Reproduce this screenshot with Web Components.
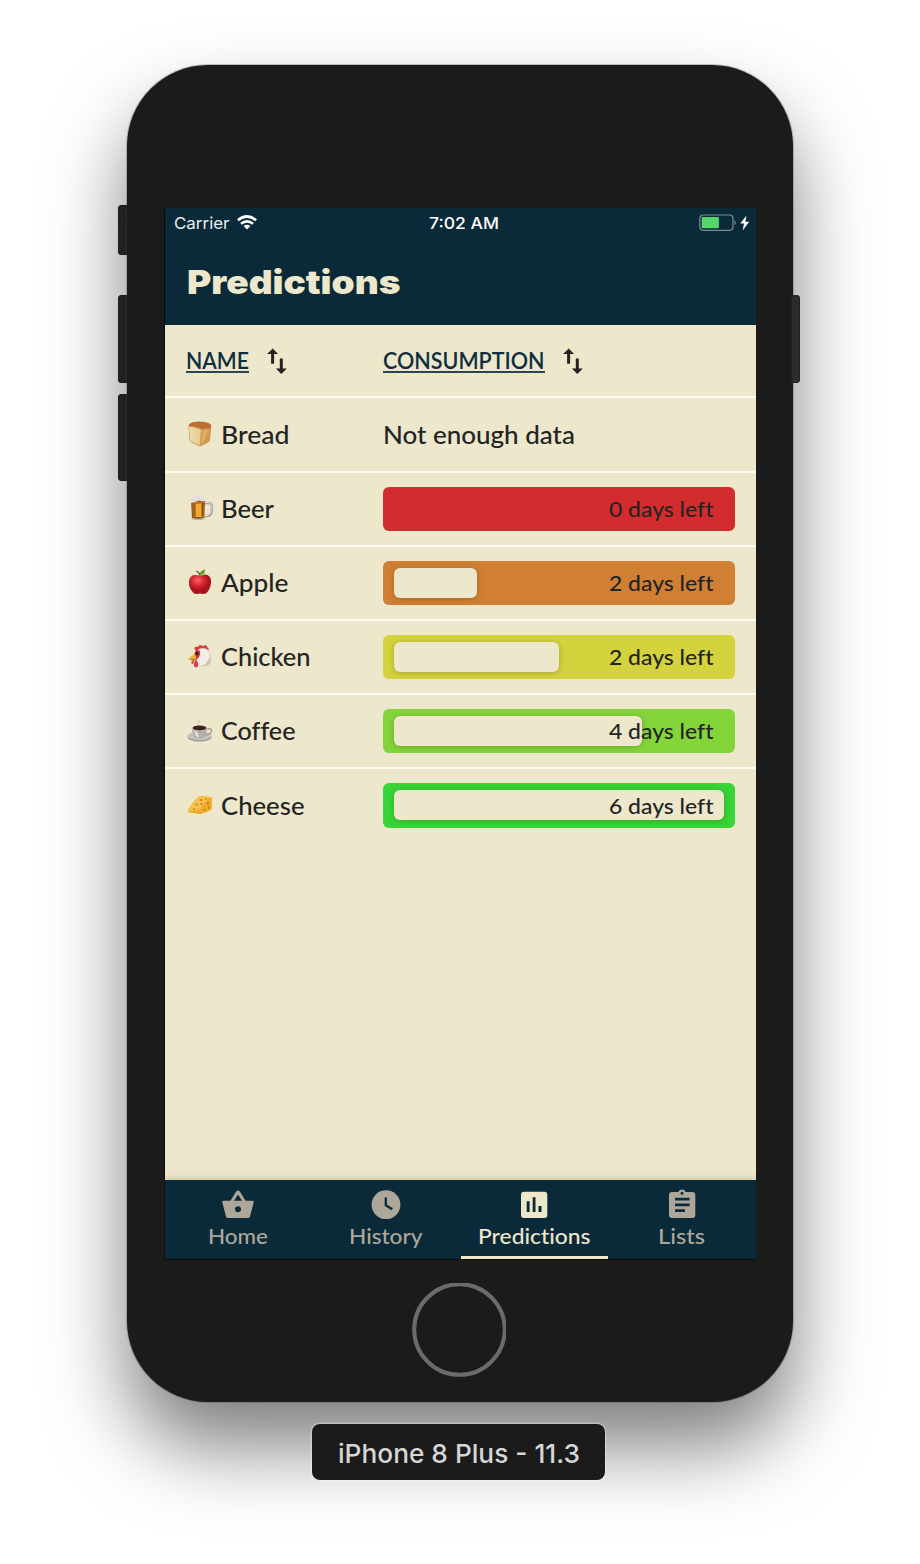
<!DOCTYPE html>
<html lang="en">
<head>
<meta charset="utf-8">
<title>Predictions</title>
<style>
html,body{margin:0;background:#fff}
body{width:920px;height:1564px;overflow:hidden;font-family:Lato,"Noto Sans",sans-serif;color:#242424;font-variant-ligatures:none}
</style>
</head>
<body>
<sim-stage>
  <phone-device>
    <status-bar></status-bar>
    <page-header>Predictions</page-header>
    <table-head></table-head>
    <item-row icon="bread" name="Bread" w="67"><fit-text w="192" style="margin-top:2px">Not enough data</fit-text></item-row>
    <item-row icon="beer" name="Beer" w="51.5"><days-bar color="#d32c2f" fill="0">0 days left</days-bar></item-row>
    <item-row icon="apple" name="Apple" w="66"><days-bar color="#d17f33" fill="25">2 days left</days-bar></item-row>
    <item-row icon="chicken" name="Chicken" w="88"><days-bar color="#d5d33d" fill="50">2 days left</days-bar></item-row>
    <item-row icon="coffee" name="Coffee" w="73"><days-bar color="#84d53a" fill="75">4 days left</days-bar></item-row>
    <item-row icon="cheese" name="Cheese" w="82" last><days-bar color="#37d538" fill="100">6 days left</days-bar></item-row>
    <tab-bar slot="tabs">
      <tab-item icon="basket" w="58">Home</tab-item>
      <tab-item icon="clock" w="71.5">History</tab-item>
      <tab-item icon="chart" w="110.5" active>Predictions</tab-item>
      <tab-item icon="list" w="45">Lists</tab-item>
    </tab-bar>
  </phone-device>
  <device-label slot="label">iPhone 8 Plus - 11.3</device-label>
</sim-stage>
<script>
function define(name, html, setup){
  const t=document.createElement('template');
  t.innerHTML=html;
  customElements.define(name, class extends HTMLElement{
    connectedCallback(){
      if(this.shadowRoot) return;
      this.attachShadow({mode:'open'}).appendChild(t.content.cloneNode(true));
      if(setup) setup(this,this.shadowRoot);
    }
  });
}

const icons={
bread:['0 0 26 26','<defs><linearGradient id="a"><stop stop-color="#f0dcae"/><stop offset="1" stop-color="#e5cb91"/></linearGradient></defs><path d="M2 6Q1 2.500 5 1.500L12 .5Q21 .5 23.500 3Q25 5 24 7.500L23 19Q23 20.500 20 22L13 25.500L4 21Q2.500 20 2.500 18Z" fill="#c98a45"/><path d="M1.500 6Q2 1 10 .8T23.500 3.500Q25 7 21 8L13 7.500Q5 3.500 1.500 6" fill="#bd6d33"/><path d="M13.500 9Q17 7 20.500 7.500T23.500 10L22.500 19.500L13 25Z" fill="#d49b50"/><path d="M16 10Q19 8 21 9L17 20L14 23Z" fill="#e0b069"/><path d="M2 9.500Q0 6 4 5.500L12 7.500Q15.500 8.500 14 12L13 25L4 20.500Q2.700 20 2.700 18Z" fill="url(#a)" stroke="#c9975a" stroke-width=".5"/>'],
beer:['0 0 26 26','<path d="M18 8h3.500q3 0 3 3v5q0 5-5 5h-1.500" fill="none" stroke="#a59d92" stroke-width="2.600"/><path d="M18 7.500h3.500q2.500 0 2.500 3v5q0 5-5 5h-1" fill="none" stroke="#ece8df" stroke-width="1"/><path d="M4 5h14l-.7 19q-6 2-12.300 0Z" fill="#8b562b"/><path d="M5.500 7h11v15H6Z" fill="#c9771c"/><path d="M9 9h5v13H9Z" fill="#edaa30"/><path d="M7 8v13M15.500 8v13" stroke="#713d14" stroke-width=".8"/><path d="M4.500 23.500q6 2 12.500 0" stroke="#ded5c4" fill="none"/><path d="M4 8Q2 4 6 2.500Q9-.5 12 1.500Q17 1 18 4Q19 6.500 16 6.500L12 5.500L8 7Z" fill="#e5dfd9"/>'],
apple:['0 0 26 26','<defs><radialGradient id="a" cx=".4" cy=".3"><stop stop-color="#f56465"/><stop offset=".55" stop-color="#d92732"/><stop offset="1" stop-color="#a9151e"/></radialGradient></defs><path d="M13 7Q17 4.500 20.500 6Q24.500 8 24 13.500Q23.500 20 19.500 24Q17 25.500 13 24.500Q9 25.500 6.500 24Q1.500 19 2 12.500Q2.500 7 7 6Q10 5.500 13 7" fill="url(#a)"/><path d="M13 7.500Q13 4 9.500 2" stroke="#74452a" stroke-width="1.300" fill="none"/><path d="M12.500 6.500Q12.500 1.500 18 .5Q18.500 5.500 12.500 6.500" fill="#4da72b"/>'],
chicken:['0 0 26 26','<path d="M8 6Q6 2 11 3Q12-.5 15.500 2Q20 0 20.500 3.500Q22.500 4 21 7L11 9Z" fill="#d93d48"/><path d="M8.500 9Q12 3 18 4.500Q23 6 23 12L23.500 18Q23 22 15 22Q9 22 9 16Z" fill="#f4ede5" stroke="#c9bdab" stroke-width=".5"/><path d="M23 12L23.500 18Q23 22 15 22Q21 19 23 12" fill="#d0c3b3"/><path d="M7.500 9Q9 5 13 7Q14 10 12 13L9 16L7 13Z" fill="#cf303b"/><ellipse cx="10" cy="9.500" rx="1.600" ry="2" fill="#33251f"/><path d="M8 10Q4 11.500 1 15.500L8 16.500Q10 13.500 8 10" fill="#eab52e"/><path d="M1 15.500L8 14.800V16.500Z" fill="#ad771b"/><path d="M5.500 16.500Q3.500 18 5 20.500Q7 19.500 7 16.500M9 15.500Q6.500 18 7 22Q9 25 11 22Q12 19 9 15.500" fill="#d9404b"/>'],
coffee:['0 0 26 26','<ellipse cx="12.500" cy="19" rx="12" ry="4.500" fill="#96948f"/><ellipse cx="12.500" cy="18" rx="12" ry="4.200" fill="#c3c1bc"/><path d="M20 11q5-1 4.500 2T18 17" fill="none" stroke="#a09d97" stroke-width="1.500"/><path d="M5 10h15q0 7-4 10q-4 1.500-7.500 0Q5 17 5 10" fill="#b0aea9"/><path d="M7 13q1.500 6 5 6.500l-1.500-5.500" fill="#e2e0da"/><ellipse cx="12.500" cy="10" rx="7.700" ry="3.100" fill="#dedcd5"/><ellipse cx="12.500" cy="10" rx="6.900" ry="2.500" fill="#3e231b"/><path d="M10 5q4-1 1-4" fill="none" stroke="#d8d4c4" stroke-width="1.600"/>'],
cheese:['0 0 26 26','<path d="M.5 20Q3 12 12.500 4L25 5L24.500 17Q22 20 13.500 22Z" fill="#efb73a"/><path d="M.5 20Q3 12 12.500 4L25 5Q17 10 13.500 17.500Z" fill="#f5c04c"/><path d="M.5 20L13.500 17.500Q17 10 25 5L24.500 17L13.500 22Z" fill="#eeac2b"/><g fill="#cf7f1f"><ellipse cx="14" cy="8" rx="1.500" ry=".9"/><ellipse cx="9.500" cy="12.500" rx="1.200" ry=".9"/><ellipse cx="14.500" cy="12" rx="1.200" ry=".9"/><ellipse cx="7" cy="17" rx="1.300" ry=".7"/><ellipse cx="21" cy="11" rx="1.100" ry="1.600"/><ellipse cx="17.500" cy="18" rx="1.300" ry="1"/><ellipse cx="22" cy="15.500" rx=".9" ry="1.200"/><ellipse cx="19" cy="7" rx="1.200" ry=".7"/></g>'],
basket:['0 0 32 30','<path fill="currentColor" fill-rule="evenodd" d="M14.300 1.300Q16-.5 17.700 1.300L23.500 10.800H31Q32 10.800 31.700 12.200L28 26.500Q27.600 28 26 28H6Q4.400 28 4 26.500L.3 12.200Q0 10.800 1 10.800H8.500ZM12 10.800H20L16 4.600ZM16 16.200a3 3 0 1 0 0 6a3 3 0 1 0 0-6Z"/>'],
clock:['0 0 32 30','<circle cx="16" cy="14.700" r="14.400" fill="currentColor"/><path d="M15.800 7.500V15.300L22.300 19.300" fill="none" stroke="#0b2a39" stroke-width="2.300"/>'],
chart:['0 0 32 30','<rect x="3" y="1.700" width="26.300" height="26.300" rx="3" fill="currentColor"/><path d="M8.700 11.200H11.600V22H8.700ZM14.700 7.300H17.500V22H14.700ZM20.500 16H23.500V22H20.500Z" fill="#0b2a39"/>'],
list:['0 0 32 30','<path fill="currentColor" fill-rule="evenodd" d="M6 1.900H12.200A4.200 4.200 0 0 1 19.800 1.900H26.300Q29.300 1.900 29.300 4.900V25Q29.300 28 26.300 28H6Q3 28 3 25V4.900Q3 1.900 6 1.900ZM16 1.700a1.500 1.500 0 1 0 0 3a1.500 1.500 0 1 0 0-3Z"/><path d="M9 9.100H23.600M9 14.900H23.600M9 20.600H19" stroke="#0b2a39" stroke-width="2.700"/>'],
sort:['0 0 20 27','<g fill="#242424"><path d="M4.100 15.800V6H.1L5.600 .5L11.100 6H7.100V15.800ZM12.800 10.500V20.500H8.800L14.300 26L19.800 20.500H15.800V10.500Z"/></g>'],
wifi:['0 0 20 15','<g fill="none" stroke="#fff" stroke-width="2.700"><path d="M.9 5.300Q10-2.300 19.100 5.300"/><path d="M4 8.800Q10 4 16 8.800"/></g><path d="M6.600 11.100Q10 8.300 13.400 11.100L10 14.600Z" fill="#fff"/>'],
battery:['0 0 51 18','<rect x=".8" y="1" width="33.200" height="15.300" rx="3.500" fill="none" stroke="#7d8b94" stroke-width="1.200"/><rect x="2.700" y="3" width="17.200" height="11.300" rx="1" fill="#53d769"/><path d="M35.500 6q2.500 2.500 0 5.300Z" fill="#7d8b94"/><path d="M47.500 1.500L41.300 9.500H45L43.700 16.500L50.200 7.800H46.300Z" fill="#fff"/>']
};

define('app-icon','<style>:host{display:block;flex:none}svg{display:block;width:100%;height:100%;overflow:visible}</style><svg></svg>',(el,r)=>{
  const [box,body]=icons[el.getAttribute('name')], s=r.querySelector('svg');
  s.setAttribute('viewBox',box); s.innerHTML=body;
});

/* Text expanded (or condensed) to a given line width. */
define('fit-text','<style>:host{display:block;white-space:pre;line-height:1}span{display:inline-block;transform-origin:0 0}</style><span><slot></slot></span>',(el,r)=>{
  requestAnimationFrame(()=>{
    const span=r.querySelector('span'), w=span.getBoundingClientRect().width, target=parseFloat(el.getAttribute('w'));
    if(!w) return;
    el.style.width=target+'px';
    span.style.transform=`scaleX(${target/w})`;
  });
});

define('sim-stage',`<style>:host{display:flex;flex-direction:column;align-items:center;padding-top:65px;width:920px;box-sizing:border-box}
.label{margin-top:22px;margin-right:3px}</style><slot></slot><div class="label"><slot name="label"></slot></div>`);

define('phone-device',`<style>
:host{display:block;position:relative;width:666px;height:1337px}
.body{position:relative;height:100%;box-sizing:border-box;border-radius:81px;background:#1b1b1b;padding:143px 37px 0 38px;box-shadow:0 0 0 1px rgba(70,70,70,.3),0 45px 78px rgba(0,0,0,.5)}
.key{position:absolute;width:12px;background:#2c2c2c;border-radius:4px;box-shadow:inset 0 0 0 1px #222}
.screen{display:flex;flex-direction:column;width:591px;height:1051px;background:#ede7cb;box-shadow:-1px 1px 0 #090909}
.grow{flex:1}
svg{display:block;margin:24px 0 0 247px}
</style>
<i class="key" style="left:-9px;top:140px;height:50px"></i><i class="key" style="left:-9px;top:229.500px;height:88px"></i><i class="key" style="left:-9px;top:328.500px;height:87.500px"></i>
<div class="body"><div class="screen"><slot></slot><div class="grow"></div><slot name="tabs"></slot></div>
<svg width="94" height="94"><circle cx="47.500" cy="46.500" r="45.300" fill="none" stroke="#6b6b6b" stroke-width="4"/></svg></div><i class="key" style="right:-7px;width:9px;top:229.500px;height:88px"></i>`);

define('status-bar',`<style>:host{display:grid;grid-template-columns:1fr auto 1fr;align-items:center;height:30px;padding:0 7px 0 8.500px;background:#0b2a39;color:#fff;font:400 16.500px Inter,sans-serif}
.l{display:flex;gap:7.500px;align-items:center;color:#e9edef}.w{width:20px;height:15px;margin-top:-2px}.b{width:51px;height:18px;justify-self:end;margin:-1px -.5px 0 0}
.t{font-weight:500;margin-left:5px}</style>
<div class="l"><fit-text w="55.500">Carrier</fit-text><app-icon class="w" name="wifi"></app-icon></div>
<fit-text class="t" w="70">7:02 AM</fit-text><app-icon class="b" name="battery"></app-icon>`);

define('page-header',`<style>:host{display:flex;height:87px;padding-left:21.500px;align-items:center;background:#0b2a39;color:#ede7cb;box-sizing:border-box}
fit-text{font:900 33px Inter,sans-serif;line-height:1;margin-top:1px}</style><fit-text w="213.500"></fit-text>`,(el,r)=>{
  r.querySelector('fit-text').textContent=el.textContent;
});

define('table-head',`<style>:host{display:grid;grid-template-columns:197.200px 1fr;height:73.400px;padding-left:21px;box-sizing:border-box;align-items:center;border-bottom:2px solid #fbf9f0;color:#0f2f3e;font-weight:600;font-size:22px}
div{display:flex;align-items:center;gap:18px}.u{border-bottom:2px solid #2b4650;height:24px;box-sizing:border-box;padding-top:1px;margin-top:1px}
app-icon{width:20px;height:27px;margin-top:1px}</style>
<div><fit-text class="u" w="63">NAME</fit-text><app-icon name="sort"></app-icon></div>
<div><fit-text class="u" w="161.500">CONSUMPTION</fit-text><app-icon name="sort"></app-icon></div>`);

define('item-row',`<style>:host{display:grid;grid-template-columns:196.700px 1fr;height:74.200px;padding:0 21px 0 21.800px;box-sizing:border-box;align-items:center;border-bottom:2px solid #fbf9f0;font-size:24.500px;font-weight:500}
:host([last]){border-bottom-color:transparent}
div{display:flex;align-items:center;gap:7.800px}app-icon{width:26px;height:26px;margin-top:-1px}div fit-text{margin-top:1px}
</style><div></div><slot></slot>`,(el,r)=>{
  const i=document.createElement('app-icon'), t=document.createElement('fit-text'), d=r.querySelector('div');
  i.setAttribute('name',el.getAttribute('icon'));
  t.setAttribute('w',+el.getAttribute('w')+1.5); t.textContent=el.getAttribute('name');
  d.append(i,t);
});

define('days-bar',`<style>:host{display:grid;width:351.500px;height:44.300px;padding:7.200px 10.700px;box-sizing:border-box;border-radius:6px;font-size:21.800px}
.fill{grid-area:1/1;border-radius:6px;background:#ede7cb;box-shadow:0 1px 6px rgba(60,60,0,.3)}
.t{display:contents}
fit-text{grid-area:1/1;justify-self:end;align-self:center;margin:0 11px 0 0;position:relative}</style>
<div class="fill"></div><div class="t"></div>`,(el,r)=>{
  el.style.background=el.getAttribute('color');
  const f=r.querySelector('.fill'), p=+el.getAttribute('fill');
  f.style.width=p+'%'; if(!p) f.style.visibility='hidden';
  const t=document.createElement('fit-text'); t.setAttribute('w','104.5'); t.textContent=el.textContent;
  r.querySelector('.t').appendChild(t);
});

define('tab-bar',`<style>:host{display:grid;grid-template-columns:repeat(4,1fr);height:79px;background:#0b2a39;box-shadow:0 -1px 7px rgba(80,60,0,.24)}</style><slot></slot>`);

define('tab-item',`<style>:host{display:flex;flex-direction:column;align-items:center;box-sizing:border-box;height:79px;padding-top:10px;gap:5px;color:#aca799;border-bottom:3px solid transparent;font-size:21.800px;font-weight:500}
:host([active]){color:#ede7cb;border-bottom-color:#ede7cb}app-icon{width:32px;height:30px;margin-left:-1px}div{display:contents}fit-text{margin-left:-1px}</style><div></div>`,(el,r)=>{
  const i=document.createElement('app-icon'), t=document.createElement('fit-text');
  i.setAttribute('name',el.getAttribute('icon'));
  t.setAttribute('w',+el.getAttribute('w')+2); t.textContent=el.textContent;
  r.querySelector('div').append(i,t);
});

define('device-label',`<style>:host{display:flex;width:293px;height:56px;justify-content:center;align-items:center;border-radius:8px;background:#1b1b1b;box-shadow:0 0 0 1.500px rgba(255,255,255,.3);color:#d6d6d6;font:500 26px Inter,sans-serif;position:relative}fit-text{margin-top:4px}div{display:contents}</style><div></div>`,(el,r)=>{
  const t=document.createElement('fit-text'); t.setAttribute('w','242'); t.textContent=el.textContent; r.querySelector('div').appendChild(t);
});
</script>
</body>
</html>
